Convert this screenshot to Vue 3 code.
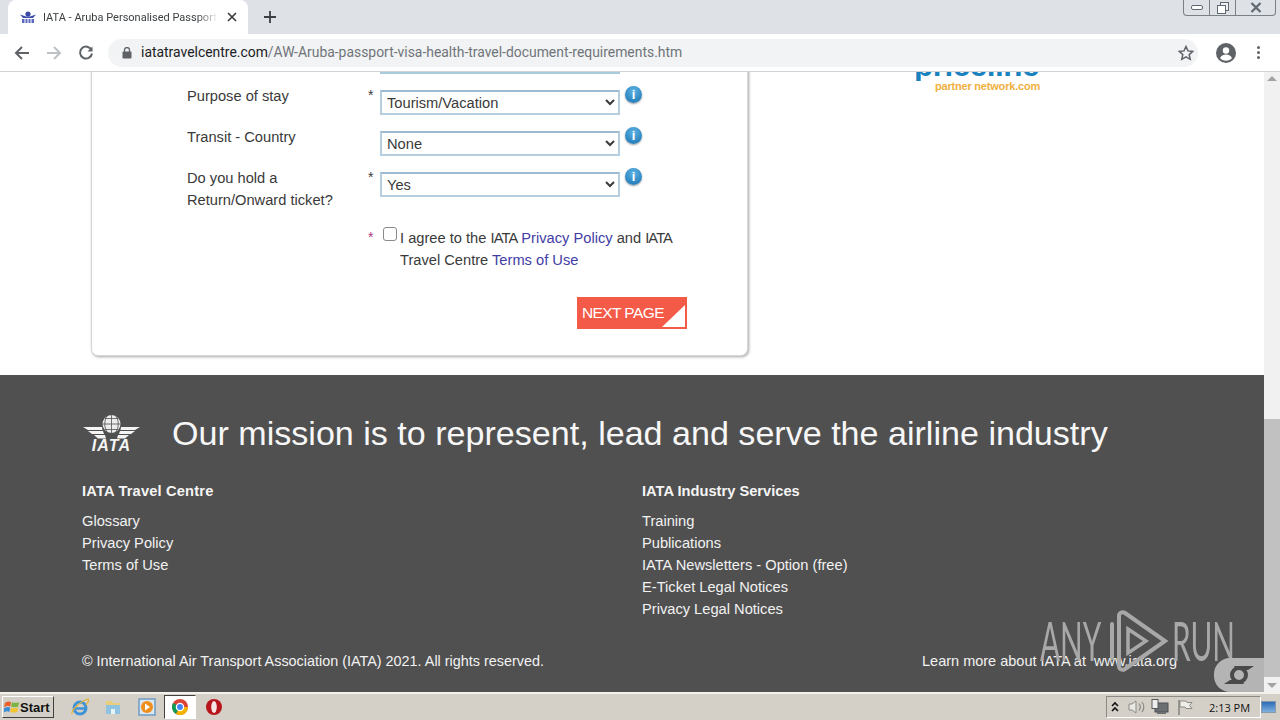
<script setup>
const rows = [
  { label: ['Purpose of stay'], star: true, value: 'Tourism/Vacation' },
  { label: ['Transit - Country'], star: false, value: 'None' },
  { label: ['Do you hold a', 'Return/Onward ticket?'], star: true, value: 'Yes' }
]
const travelLinks = ['Glossary', 'Privacy Policy', 'Terms of Use']
const industryLinks = ['Training', 'Publications', 'IATA Newsletters - Option (free)', 'E-Ticket Legal Notices', 'Privacy Legal Notices']
</script>

<template>
  <div class="screen">
    <header class="chrome">
      <div class="tabstrip">
        <div class="tab">
          <svg class="favicon" viewBox="0 0 16 12" width="16" height="12">
            <circle cx="8" cy="3" r="2.6" fill="#3b4aa8" />
            <path d="M0 3.5l6 2h4l6-2-3 3.5H3z" fill="#3b4aa8" />
            <rect x="2" y="8" width="12" height="4" fill="#5a68bd" />
            <path d="M5 8v4M8 8v4M11 8v4" stroke="#fff" stroke-width="1" />
          </svg>
          <span class="tab-title">IATA - Aruba Personalised Passport,</span>
          <svg class="tab-close" viewBox="0 0 10 10" width="10" height="10">
            <path d="M1 1l8 8M9 1l-8 8" stroke="#3c4043" stroke-width="1.7" />
          </svg>
        </div>
        <svg class="new-tab" viewBox="0 0 12 12" width="12" height="12">
          <path d="M6 0v12M0 6h12" stroke="#3c4043" stroke-width="1.8" />
        </svg>
        <div class="win-controls">
          <div class="win-btn">
            <svg viewBox="0 0 12 6" width="12" height="6"><rect x="0.5" y="0.5" width="11" height="4" rx="1.5" fill="#fff" stroke="#5f6770" /></svg>
          </div>
          <div class="win-btn">
            <svg viewBox="0 0 12 12" width="12" height="12">
              <rect x="3.5" y="0.5" width="8" height="8" fill="#eef0f3" stroke="#5f6770" />
              <rect x="0.5" y="3.5" width="8" height="8" fill="#fff" stroke="#5f6770" />
            </svg>
          </div>
          <div class="win-btn wide">
            <svg viewBox="0 0 12 11" width="12" height="11"><path d="M1.5 1l9 9M10.5 1l-9 9" stroke="#5f6770" stroke-width="2.2" fill="none" /></svg>
          </div>
        </div>
      </div>
      <div class="toolbar">
        <svg class="nav" viewBox="0 0 16 16" width="16" height="16"><path d="M15 8H2M8 2L2 8l6 6" stroke="#5f6368" stroke-width="2" fill="none" /></svg>
        <svg class="nav" viewBox="0 0 16 16" width="16" height="16"><path d="M1 8h13M8 2l6 6-6 6" stroke="#bdc1c6" stroke-width="2" fill="none" /></svg>
        <svg class="nav" viewBox="0 0 16 16" width="16" height="16"><path d="M13.5 5A6 6 0 1 0 14 8.5" stroke="#5f6368" stroke-width="2" fill="none" /><path d="M14.5 1.5v5h-5z" fill="#5f6368" /></svg>
        <div class="omnibox">
          <svg class="lock" viewBox="0 0 10 12" width="10" height="12">
            <rect x="0.5" y="4.5" width="9" height="7" rx="1" fill="#5f6368" />
            <path d="M2.5 5V3a2.500 2.500 0 0 1 5 0v2" stroke="#5f6368" stroke-width="1.3" fill="none" />
          </svg>
          <span class="url"><span class="host">iatatravelcentre.com</span>/AW-Aruba-passport-visa-health-travel-document-requirements.htm</span>
          <svg class="star" viewBox="0 0 16 16" width="16" height="16"><path d="M8 1.500l2 4.400 4.800.5-3.600 3.200 1 4.700L8 11.900l-4.200 2.400 1-4.700L1.200 6.400 6 5.900z" fill="none" stroke="#5f6368" stroke-width="1.500" /></svg>
        </div>
        <svg class="profile" viewBox="0 0 20 20" width="20" height="20">
          <circle cx="10" cy="10" r="10" fill="#5f6368" />
          <circle cx="10" cy="7.500" r="3.200" fill="#fff" />
          <path d="M4 15c1.500-2.600 3.700-3.400 6-3.400s4.500.8 6 3.400c-1.500 1.800-3.600 2.800-6 2.800s-4.500-1-6-2.800z" fill="#fff" />
        </svg>
        <div class="menu-dots"><i></i><i></i><i></i></div>
      </div>
    </header>

    <div class="viewport">
      <main class="page">
        <section class="content">
          <div class="card">
            <div class="cut-select"></div>
            <div v-for="row in rows" :key="row.value" class="form-row">
              <div class="field-label">
                <div v-for="line in row.label" :key="line">{{ line }}</div>
              </div>
              <div class="field-star">{{ row.star ? '*' : '' }}</div>
              <select class="field-select">
                <option>{{ row.value }}</option>
              </select>
              <div class="info">i</div>
            </div>
            <div class="agree-row">
              <div class="agree-star">*</div>
              <input type="checkbox" class="agree-check" />
              <div class="agree-text">I agree to the <span class="tight">IATA</span> <a>Privacy Policy</a> and <span class="tight">IATA</span><br />Travel Centre <a>Terms of Use</a></div>
            </div>
            <div class="actions">
              <button class="next-btn">NEXT PAGE</button>
            </div>
          </div>
          <aside class="partner">
            <div class="partner-clip"><span class="priceline">priceline</span></div>
            <div class="partner-sub">partner network.com</div>
          </aside>
        </section>
        <footer class="footer">
          <div class="mission">
            <div class="iata-logo">
              <svg viewBox="0 0 57 24" width="57" height="24">
                <path d="M0 12h19l.5 3H5zM5 16h15l1 3H9zM11 20h11l1 3.500h-8zM57 12H38l-.5 3H52zM52 16H37l-1 3h12zM46 20H35l-1 3.500h8z" fill="#f4f4f4" />
                <circle cx="28.500" cy="9" r="9" fill="#ececec" />
                <path d="M19.500 9h18M28.500 0v18M22 3.500h13M22 14.500h13M24 1c-3 5-3 11 0 16M33 1c3 5 3 11 0 16" stroke="#505050" stroke-width=".8" fill="none" />
              </svg>
              <span class="iata-word">IATA</span>
            </div>
            <h1 class="mission-text">Our mission is to represent, lead and serve the airline industry</h1>
          </div>
          <div class="link-cols">
            <div class="link-col">
              <h2>IATA Travel Centre</h2>
              <a v-for="l in travelLinks" :key="l">{{ l }}</a>
            </div>
            <div class="link-col">
              <h2>IATA Industry Services</h2>
              <a v-for="l in industryLinks" :key="l">{{ l }}</a>
            </div>
          </div>
          <div class="legal">
            <span class="copyright">© International Air Transport Association (IATA) 2021. All rights reserved.</span>
            <span class="learn">Learn more about IATA at&nbsp; www.iata.org</span>
          </div>
        </footer>
      </main>
      <div class="scrollbar">
        <svg class="sb-arrow" viewBox="0 0 10 6" width="10" height="6"><path d="M0 6l5-5 5 5z" fill="#a3a3a3" /></svg>
        <div class="sb-thumb"></div>
        <svg class="sb-arrow" viewBox="0 0 10 6" width="10" height="6"><path d="M0 0l5 5 5-5z" fill="#a3a3a3" /></svg>
      </div>
      <div class="watermark">
        <span class="wm-word wm-any">ANY</span>
        <svg class="wm-play" viewBox="0 0 62 62" width="62" height="62">
          <path d="M4 14v34" stroke="#a8a8a8" stroke-width="4" fill="none" stroke-linecap="round" />
          <path d="M17 3l40 28-40 28c-3 2-6 0-6-3V6c0-3 3-5 6-3z" fill="none" stroke="#a8a8a8" stroke-width="4" />
          <path d="M20 19l18 12-18 12z" fill="none" stroke="#a8a8a8" stroke-width="3.500" />
        </svg>
        <span class="wm-word wm-run">RUN</span>
      </div>
      <div class="wm-badge">
        <svg viewBox="0 0 32 24" width="32" height="24">
          <ellipse cx="16" cy="12" rx="7" ry="7" fill="none" stroke="#4a4a4a" stroke-width="4" />
          <path d="M11 3h20l-6 4H13zM21 21H1l6-4h12z" fill="#4a4a4a" />
        </svg>
      </div>
    </div>

    <div class="taskbar">
      <div class="start">
        <svg viewBox="0 0 18 16" width="16" height="15">
          <path d="M1 3c3-2 5-2 7-1L7 7C5 6 3 6 0 8z" fill="#e8622a" />
          <path d="M9 2c2 1 5 1 8 0l-1 5c-3 1-6 1-8 0z" fill="#7cb342" />
          <path d="M0 9c3-2 5-2 7-1l-1 5c-2-1-4-1-7 1z" fill="#3a8bd8" />
          <path d="M8 8c2 1 5 1 8 0l-1 5c-3 1-6 1-8 0z" fill="#f4c430" />
        </svg>
        <span>Start</span>
      </div>
      <div class="quick">
        <svg viewBox="0 0 18 18" width="18" height="18">
          <circle cx="9" cy="10" r="6" fill="none" stroke="#3f93d6" stroke-width="3" />
          <path d="M3 10.500h12" stroke="#3f93d6" stroke-width="2.500" />
          <path d="M1 16C0 12 10 3 17 1c1 2-1 5-2 6" fill="none" stroke="#e3b23c" stroke-width="1.300" />
        </svg>
        <svg viewBox="0 0 18 18" width="18" height="18">
          <path d="M2 3h6l1 2h7v11H2z" fill="#e9cf7d" />
          <rect x="2" y="7" width="14" height="9" fill="#8fc3df" />
          <rect x="7" y="11" width="4" height="5" fill="#e8f3f8" />
        </svg>
        <svg class="nudge" viewBox="0 0 18 18" width="18" height="18">
          <rect x="1" y="1" width="16" height="16" fill="#dbe6f0" stroke="#6f9cc3" stroke-width="1.500" />
          <circle cx="9" cy="9" r="6" fill="#ee8f1c" />
          <path d="M7 5.500l5 3.500-5 3.500z" fill="#fff" />
        </svg>
        <div class="active-app">
          <svg viewBox="0 0 18 18" width="18" height="18">
            <circle cx="9" cy="9" r="8" fill="#db4437" />
            <path d="M9 9L2.100 5A8 8 0 0 0 5 16z" fill="#0f9d58" />
            <path d="M9 9l-4 7a8 8 0 0 0 12-7z" fill="#f4b400" />
            <circle cx="9" cy="9" r="3.600" fill="#4285f4" stroke="#fff" stroke-width="1.300" />
          </svg>
        </div>
        <svg class="nudge" viewBox="0 0 18 18" width="18" height="18">
          <circle cx="9" cy="9" r="8" fill="#b8141c" />
          <ellipse cx="9" cy="9" rx="2.800" ry="6" fill="#f5e6e6" />
        </svg>
      </div>
      <div class="tray">
        <svg class="tray-wide" viewBox="0 0 10 12" width="10" height="12"><path d="M2 5l3-3 3 3M2 10l3-3 3 3" fill="none" stroke="#111" stroke-width="1.600" /></svg>
        <svg viewBox="0 0 18 16" width="18" height="16">
          <path d="M1 5h3l4-3v12l-4-3H1z" fill="#e8e8e4" stroke="#8b8b85" />
          <path d="M11 4.500c1.500 2 1.500 5 0 7M14 3c2.200 3 2.200 7 0 10" fill="none" stroke="#8b8b85" stroke-width="1.200" />
        </svg>
        <svg class="tray-wide" viewBox="0 0 18 16" width="18" height="16">
          <rect x="4" y="4" width="13" height="9" fill="#6b6f72" stroke="#4c4f52" />
          <rect x="1" y="0.500" width="6" height="9" fill="#eee" stroke="#55585a" />
          <rect x="6" y="13" width="9" height="2" fill="#6b6f72" />
        </svg>
        <svg viewBox="0 0 16 16" width="16" height="16">
          <path d="M2 1v15" stroke="#77776f" stroke-width="1.300" />
          <path d="M3 2h6l1 1.500h5l-2.500 3 2.500 3H9L8 8H3z" fill="#f0efe9" stroke="#8b8b85" />
        </svg>
        <span class="clock">2:13 PM</span>
      </div>
      <div class="show-desktop"></div>
    </div>
  </div>
</template>

<style>
html, body { margin: 0; padding: 0; overflow: hidden; }
</style>

<style scoped>
.screen {
  width: 1280px;
  height: 720px;
  display: flex;
  flex-direction: column;
  overflow: hidden;
  font-family: "Liberation Sans", Arial, sans-serif;
  position: relative;
  background: #fff;
}

/* browser chrome */
.chrome { flex: 0 0 72px; display: flex; flex-direction: column; border-bottom: 1px solid #d0d2d6; box-sizing: border-box; }
.tabstrip { flex: 0 0 34px; background: #dee1e6; display: flex; align-items: center; padding-left: 8px; position: relative; }
.tab { width: 240px; height: 34px; box-sizing: border-box; background: #fff; border-radius: 8px 8px 0 0; display: flex; align-items: center; padding-left: 12px; }
.favicon { flex: none; }
.tab-title { width: 175px; margin-left: 7px; font: 11px Roboto, "Open Sans", sans-serif; color: #3c4043; white-space: nowrap; overflow: hidden; -webkit-mask-image: linear-gradient(to right, #000 88%, transparent); mask-image: linear-gradient(to right, #000 88%, transparent); }
.tab-close { margin-left: 9px; flex: none; }
.new-tab { margin-left: 16px; }
.win-controls { position: absolute; top: 0; right: 4px; width: 93px; height: 16px; display: flex; border: 1px solid #7b8087; border-top: 0; border-radius: 0 0 4px 4px; box-sizing: border-box; }
.win-btn { flex: 0 0 25px; display: flex; align-items: center; justify-content: center; border-right: 1px solid #7b8087; }
.win-btn.wide { flex: 1; border-right: 0; }
.toolbar { flex: 1; display: flex; align-items: center; background: #fff; padding-left: 14px; }
.nav { margin-right: 16px; flex: none; }
.omnibox { margin-left: -2px; width: 1090px; height: 28px; box-sizing: border-box; background: #f1f3f4; border-radius: 14px; display: flex; align-items: center; padding-left: 14px; flex: none; }
.lock { flex: none; }
.url { margin: 0 0 2px 9px; font: 13.92px Roboto, "Open Sans", sans-serif; color: #70757a; white-space: nowrap; flex: 1; }
.host { color: #202124; }
.star { margin-right: 4px; flex: none; }
.profile { margin-left: 18px; flex: none; }
.menu-dots { margin-left: 21px; display: flex; flex-direction: column; gap: 2px; }
.menu-dots i { width: 3px; height: 3px; border-radius: 50%; background: #5f6368; display: block; }

/* page */
.viewport { flex: 1; display: flex; min-height: 0; position: relative; }
.page { flex: 1; min-width: 0; display: flex; flex-direction: column; }
.content { flex: 0 0 303px; display: flex; overflow: hidden; background: #fff; padding-left: 91px; }
.card { width: 657px; height: 344px; margin-top: -60px; box-sizing: border-box; flex: none; border: 1px solid #d6d6d6; border-radius: 7px; box-shadow: 1px 1px 3px rgba(0, 0, 0, .35); padding: 36px 0 0 95px; background: #fff; color: #3a3a3a; font-size: 14.67px; }
.cut-select { margin-left: 193px; width: 240px; height: 25px; box-sizing: border-box; border: 2px solid #a9cbdc; margin-bottom: 11px; }
.form-row { display: flex; align-items: flex-start; line-height: 22px; margin-bottom: 11px; }
.field-label { width: 181px; flex: none; }
.field-star { width: 12px; flex: none; line-height: 20px; font-size: 14px; }
.field-select { width: 240px; height: 25px; margin-top: 5px; box-sizing: border-box; flex: none; border: 2px solid #b5cfe0; border-top-color: #9dbad0; background: #fff; color: #3a3a3a; font: 14.67px "Liberation Sans", Arial, sans-serif; padding: 0 0 0 1px; outline: 0; border-radius: 0; }
.info { width: 17px; height: 17px; margin: 1px 0 0 5px; flex: none; border-radius: 50%; background: radial-gradient(circle at 50% 30%, #5db3e4, #1670b0); box-shadow: 0 1px 2px rgba(0, 0, 0, .4); color: #fff; font: bold 13px/17px "Liberation Sans", sans-serif; text-align: center; }
.agree-row { display: flex; align-items: flex-start; margin-top: 16px; line-height: 22px; }
.agree-star { width: 15px; margin-left: 181px; color: #b0397f; flex: none; font-size: 14px; line-height: 20px; }
.agree-check { appearance: none; width: 14px; height: 14px; margin: 0 3px 0 0; flex: none; box-sizing: border-box; border: 1px solid #8a8a8a; border-radius: 3px; background: #fff; }
.agree-text { white-space: nowrap; }
.agree-text a { color: #3f3da5; }
.tight { letter-spacing: -.9px; }
.actions { display: flex; margin-top: 26px; padding-left: 390px; }
.next-btn { position: relative; width: 110px; height: 32px; padding: 0 0 0 5px; border: 0; background: #f45a48; color: #fff; font: 15.5px "Liberation Sans", Arial, sans-serif; letter-spacing: -.6px; text-align: left; }
.next-btn::after { content: ""; position: absolute; right: 2px; bottom: 2px; border-style: solid; border-width: 0 0 22px 23px; border-color: transparent transparent #fff transparent; }
.partner { margin-left: 168px; width: 130px; margin-top: -30px; }
.partner-clip { height: 39px; overflow: hidden; display: flex; align-items: flex-end; margin-left: -2px; }
.priceline { font: bold 31.5px/33px "Liberation Sans", sans-serif; color: #1b82c0; letter-spacing: -.5px; margin-bottom: -1px; }
.partner-sub { margin: 0 0 0 19px; font: bold 11px/11px "Liberation Sans", sans-serif; color: #f0b040; white-space: nowrap; letter-spacing: -.2px; }

/* footer */
.footer { flex: 1; background: #505050; color: #f2f2f2; padding: 40px 0 0 82px; box-sizing: border-box; position: relative; font-size: 14.67px; }
.mission { display: flex; align-items: center; height: 38px; }
.iata-logo { width: 57px; height: 38px; margin-left: 1px; display: flex; flex-direction: column; align-items: center; flex: none; }
.iata-word { font: italic bold 16px/13px "Liberation Sans", sans-serif; color: #f4f4f4; letter-spacing: 1.1px; }
.mission-text { margin: 0 0 2px 32px; font: normal 34.1px/38px "Liberation Sans", Arial, sans-serif; color: #f7f7f7; white-space: nowrap; }
.link-cols { display: flex; margin-top: 27px; }
.link-col { width: 560px; display: flex; flex-direction: column; line-height: 22px; }
.link-col h2 { margin: 0 0 8px; font: bold 14.67px/22px "Liberation Sans", sans-serif; color: #f5f5f5; }
.link-col:first-child h2 { letter-spacing: .17px; }
.legal { position: absolute; left: 82px; right: 87px; top: 275px; line-height: 22px; display: flex; justify-content: space-between; }
.copyright { font-size: 14.4px; }
.learn { font-size: 14.5px; }

/* scrollbar */
.scrollbar { flex: 0 0 16px; background: #f1f1f1; display: flex; flex-direction: column; align-items: center; padding: 3px 0; box-sizing: border-box; }
.sb-thumb { width: 100%; height: 258px; margin-top: auto; margin-bottom: 6px; background: #c1c1c1; }

/* watermark */
.watermark { position: absolute; left: 1040px; top: 538px; display: flex; align-items: center; color: #a8a8a8; pointer-events: none; }
.wm-word { font: 400 54px/62px Lato, "Liberation Sans", sans-serif; transform: scaleX(.55); transform-origin: left; display: block; white-space: nowrap; margin-top: -1px; }
.wm-any { width: 68px; }
.wm-run { width: 60px; margin-left: 2px; }
.wm-badge { position: absolute; right: 16px; top: 586px; width: 50px; height: 34px; border-radius: 16px 0 0 16px; background: #b4b4b4; display: flex; align-items: center; justify-content: center; }

/* taskbar */
.taskbar { flex: 0 0 28px; box-sizing: border-box; background: #d4d0c8; border-top: 2px solid #f4f2ec; display: flex; align-items: center; position: relative; }
.start { width: 52px; height: 22px; margin-left: 2px; box-sizing: border-box; display: flex; align-items: center; padding-left: 1px; border: 1px solid; border-color: #fff #404040 #404040 #fff; font: bold 13px "Liberation Sans", sans-serif; color: #111; }
.quick { display: flex; align-items: center; margin-left: 17px; gap: 15px; }
.nudge { margin-left: 1px; }
.active-app { width: 32px; height: 24px; margin: 0 -7px; background: #fff; border: 1px solid; border-color: #404040 #fff #fff #404040; box-sizing: border-box; display: flex; align-items: center; justify-content: center; }
.tray { position: absolute; left: 1106px; top: 2px; width: 155px; height: 22px; box-sizing: border-box; border: 1px solid; border-color: #8c8a84 #fff #fff #8c8a84; display: flex; align-items: center; gap: 5px; padding-left: 3px; }
.tray-wide { margin-right: 3px; }
.clock { margin-left: 11px; font: 11px "Open Sans", "Noto Sans", sans-serif; color: #111; white-space: nowrap; }
.show-desktop { position: absolute; left: 1261px; top: 7px; width: 15px; height: 12px; box-sizing: border-box; background: linear-gradient(#2b6cb8, #7fb0de); border: 1px solid #89a; }
</style>
